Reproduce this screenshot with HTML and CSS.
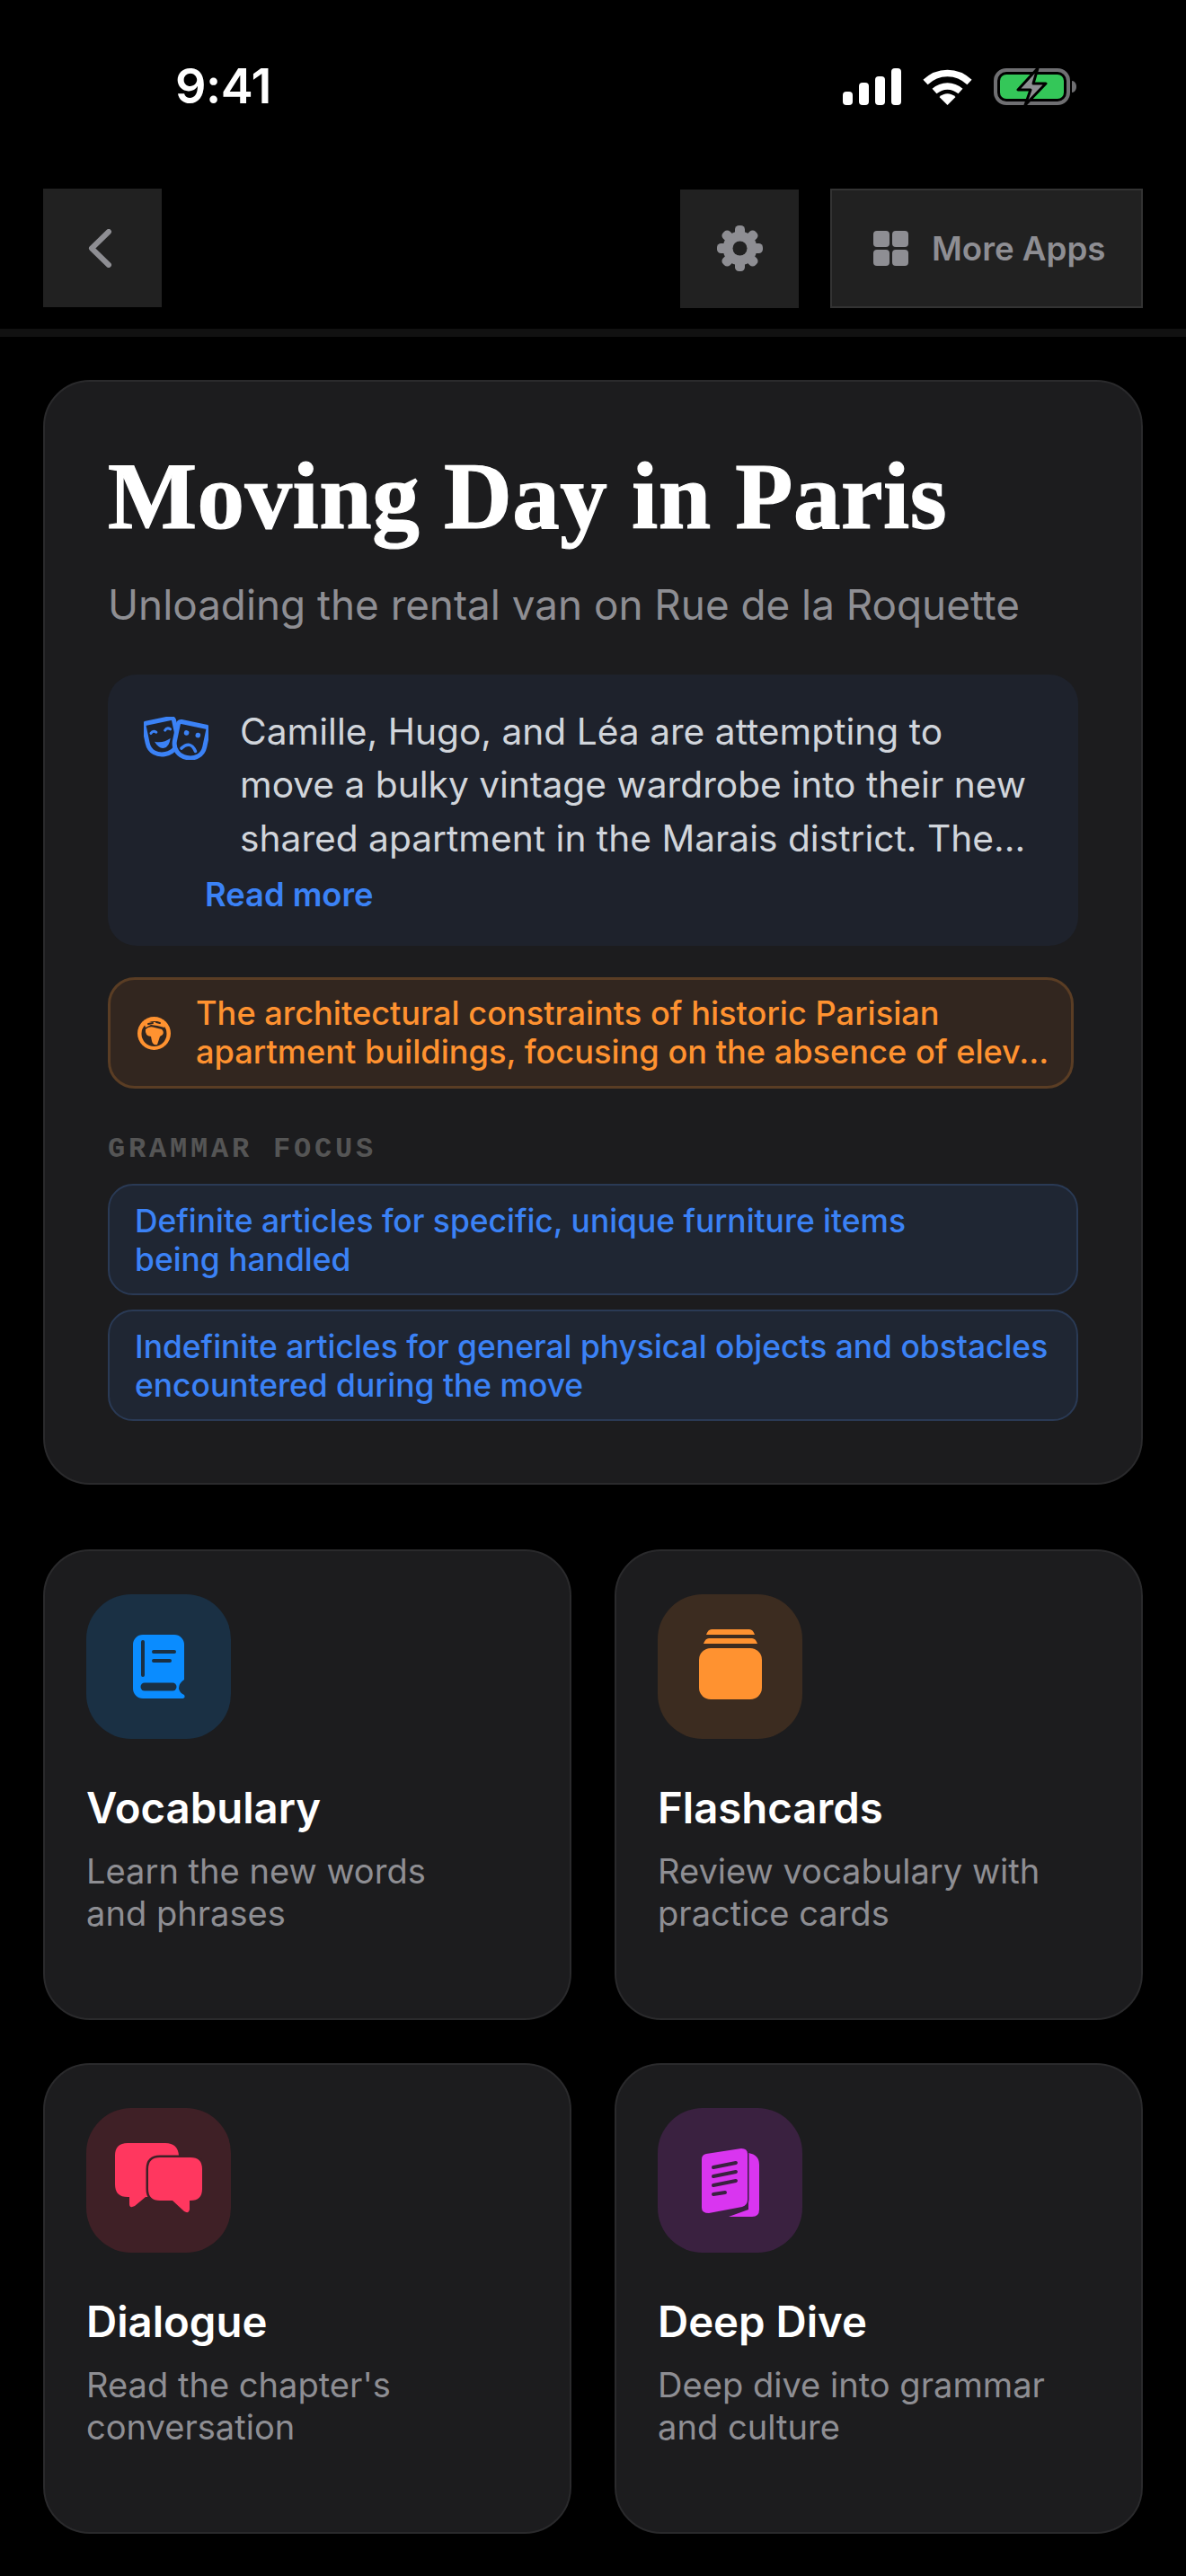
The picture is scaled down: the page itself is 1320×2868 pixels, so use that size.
FILE: index.html
```html
<!DOCTYPE html>
<html lang="en">
<head>
    <meta charset="UTF-8">
    <meta name="viewport" content="width=device-width, initial-scale=1.0">
    <title>Moving Day in Paris</title>
    <link rel="stylesheet" href="styles.css">
</head>
<body>
    <div class="status-bar">
        <span class="clock">9:41</span>
        <div class="status-icons">
            <svg class="ic-signal" viewBox="0 0 65 41" fill="#fff">
                <rect x="0" y="26" width="11" height="15" rx="4"/>
                <rect x="18" y="16" width="11" height="25" rx="4"/>
                <rect x="36" y="9" width="11" height="32" rx="4"/>
                <rect x="54" y="0" width="11" height="41" rx="4"/>
            </svg>
            <svg class="ic-wifi" viewBox="0 0 57 41" fill="none" stroke="#fff" stroke-width="7.5">
                <path d="M4 15.5C18 2 39 2 53 15.5"/>
                <path d="M14 25.5C22.5 18 34.5 18 43 25.5"/>
                <path d="M19.5 32C25 27 32 27 37.5 32L28.5 41Z" fill="#fff" stroke="none"/>
            </svg>
            <svg class="ic-battery" viewBox="0 0 92 43">
                <rect x="2" y="3" width="81" height="37" rx="12" fill="none" stroke="#6f6f72" stroke-width="4"/>
                <rect x="7" y="8" width="71" height="27" rx="7" fill="#34c759"/>
                <path d="M87 15c3 0 5 3 5 6.500s-2 6.500-5 6.500z" fill="#6f6f72"/>
                <path d="M49 1L27 25H41L35 42L58 18H44Z" fill="#8e8e93" stroke="#000" stroke-width="3" stroke-linejoin="round"/>
            </svg>
        </div>
    </div>

    <header class="topbar">
        <button class="icon-btn">
            <svg class="ic-back" viewBox="0 0 28 43" fill="none" stroke="#8e8e93" stroke-width="6" stroke-linecap="round" stroke-linejoin="round">
                <path d="M24 3L5 21.500L24 40"/>
            </svg>
        </button>
        <div class="topbar-right">
            <button class="icon-btn">
                <svg class="ic-gear" viewBox="0 0 51 51">
                    <g fill="#8e8e93">
                        <circle cx="25.500" cy="25.500" r="19"/>
                        <rect x="20" y="0" width="11" height="51" rx="4.500"/>
                        <rect x="20" y="0" width="11" height="51" rx="4.500" transform="rotate(45 25.500 25.500)"/>
                        <rect x="20" y="0" width="11" height="51" rx="4.500" transform="rotate(90 25.500 25.500)"/>
                        <rect x="20" y="0" width="11" height="51" rx="4.500" transform="rotate(135 25.500 25.500)"/>
                    </g>
                    <circle cx="25.500" cy="25.500" r="8" fill="#212121"/>
                </svg>
            </button>
            <button class="apps-btn">
                <svg class="ic-apps" viewBox="0 0 39 39" fill="#8e8e93">
                    <rect x="0" y="0" width="18" height="18" rx="4"/>
                    <rect x="21" y="0" width="18" height="18" rx="4"/>
                    <rect x="0" y="21" width="18" height="18" rx="4"/>
                    <rect x="21" y="21" width="18" height="18" rx="4"/>
                </svg>
                More Apps
            </button>
        </div>
    </header>

    <main class="content">
        <section class="chapter">
            <h1>Moving Day in Paris</h1>
            <p class="subtitle">Unloading the rental van on Rue de la Roquette</p>

            <div class="summary">
                <div class="summary-row">
                    <svg class="ic-masks" viewBox="0 0 72 48" fill="none" stroke="#3b82f6" stroke-width="5" stroke-linecap="round">
                        <g transform="translate(20 22) rotate(-12)">
                            <path d="M-14-18H14a3 3 0 0 1 3 3V4C17 14 9 20 0 20C-9 20-17 14-17 4V-15a3 3 0 0 1 3-3Z"/>
                            <path d="M-11-6Q-8-9-5-6M5-6Q8-9 11-6" stroke-width="3"/>
                            <path d="M-9 4Q0 8 9 4Q6 13 0 13Q-6 13-9 4Z" fill="#3b82f6" stroke="none"/>
                        </g>
                        <g transform="translate(52 26) rotate(12)">
                            <path d="M-14-18H14a3 3 0 0 1 3 3V4C17 14 9 20 0 20C-9 20-17 14-17 4V-15a3 3 0 0 1 3-3Z" fill="#1e222c"/>
                            <circle cx="-6" cy="-7" r="2.800" fill="#3b82f6" stroke="none"/>
                            <circle cx="7" cy="-7" r="2.800" fill="#3b82f6" stroke="none"/>
                            <path d="M-8 11Q0 0 8 11" stroke-width="3.500"/>
                        </g>
                    </svg>
                    <p>Camille, Hugo, and Léa are attempting to move a bulky vintage wardrobe into their new shared apartment in the Marais district. The...</p>
                </div>
                <a class="read-more">Read more</a>
            </div>

            <div class="culture">
                <svg class="ic-globe" viewBox="0 0 37 37">
                    <circle cx="18.500" cy="18.500" r="18.500" fill="#ff9230"/>
                    <circle cx="18.500" cy="19" r="14" fill="#32261f"/>
                    <path d="M7 6H30V12L22 10L15 9L9 12Z" fill="#ff9230"/>
                    <path d="M9 14Q13 10 19 12L27 14Q30 17 28 20L25 22L22 31Q17 32 16 27L15 22Q8 21 9 14Z" fill="#ff9230"/>
                    <path d="M12 8L17 7M21 6L25 7" stroke="#32261f" stroke-width="2" stroke-linecap="round"/>
                </svg>
                <p>The architectural constraints of historic Parisian apartment buildings, focusing on the absence of elev...</p>
            </div>

            <h2 class="focus-label">GRAMMAR FOCUS</h2>
            <div class="focus-list">
                <div class="chip">Definite articles for specific, unique furniture items<br>being handled</div>
                <div class="chip">Indefinite articles for general physical objects and obstacles encountered during the move</div>
            </div>
        </section>

        <section class="modules">
            <article class="module">
                <div class="tile tile-blue">
                    <svg class="ic-book" viewBox="0 0 58 71">
                        <path d="M11 0H46A11 11 0 0 1 57 11V50Q51 54 51 60Q52 65 57 67Q59 71 54 71H11A11 11 0 0 1 0 60V11A11 11 0 0 1 11 0Z" fill="#0a8cff"/>
                        <path d="M11 8V45M23 19H46M23 29H41M13 58H45" fill="none" stroke="#1a3044" stroke-width="4" stroke-linecap="round"/>
                        <path d="M13 58H44" fill="none" stroke="#1a3044" stroke-width="9" stroke-linecap="round"/>
                    </svg>
                </div>
                <h3>Vocabulary</h3>
                <p>Learn the new words<br>and phrases</p>
            </article>
            <article class="module">
                <div class="tile tile-orange">
                    <svg class="ic-stack" viewBox="0 0 70 78" fill="#ff9230">
                        <path d="M14 0H56Q60 0 62 6H8Q10 0 14 0Z"/>
                        <path d="M11 10H59Q63 10 65 16H5Q7 10 11 10Z"/>
                        <rect x="0" y="21" width="70" height="57" rx="13"/>
                    </svg>
                </div>
                <h3>Flashcards</h3>
                <p>Review vocabulary with<br>practice cards</p>
            </article>
            <article class="module">
                <div class="tile tile-pink">
                    <svg class="ic-chat" viewBox="0 0 98 78">
                        <path d="M14 0H56Q70 0 71 14V46Q71 60 56 60H34L22 70Q16 73 16 68V60H14Q0 60 0 46V14Q0 0 14 0Z" fill="#ff375f"/>
                        <path d="M50 16H84Q97 16 97 29V51Q97 64 84 64H83V74Q82 79 77 76L64 64H50Q37 64 37 51V29Q37 16 50 16Z" fill="#ff375f" stroke="#3f2026" stroke-width="5" paint-order="stroke"/>
                    </svg>
                </div>
                <h3>Dialogue</h3>
                <p>Read the chapter's<br>conversation</p>
            </article>
            <article class="module">
                <div class="tile tile-purple">
                    <svg class="ic-doc" viewBox="0 0 64 77">
                        <path d="M52 5Q64 7 64 18V68Q64 76 56 76L30 76L52 68Z" fill="#d935f0"/>
                        <path d="M5 6L44 0Q51 0 51 6V57Q51 63 45 65L8 72Q0 72 0 66V12Q0 7 5 6Z" fill="#d935f0" stroke="#3a2140" stroke-width="3" paint-order="stroke"/>
                        <path d="M13 21L38 16M13 31L38 26M13 41L38 36M13 51L26 49" stroke="#3a2140" stroke-width="4" stroke-linecap="round"/>
                    </svg>
                </div>
                <h3>Deep Dive</h3>
                <p>Deep dive into grammar<br>and culture</p>
            </article>
        </section>
    </main>
</body>
</html>
```

FILE: styles.css
```css
* {box-sizing:border-box;}
html, body {margin:0; padding:0;}
body {
    width:1320px;
    min-height:2868px;
    background:#000;
    color:#fff;
    font-family:Inter, "Noto Sans", sans-serif;
    overflow:hidden;
}
h1, h2, h3, p {margin:0;}
svg {display:block; flex:none;}

/* status bar */
.status-bar {
    height:210px;
    padding:70px 122px 0 195px;
    display:flex;
    justify-content:space-between;
    align-items:flex-start;
}
.clock {font-size:54px; line-height:52px; font-weight:600; letter-spacing:-0.5px;}
.status-icons {display:flex; align-items:center; gap:23px; padding-top:5px;}
.ic-signal {width:65px; height:41px;}
.ic-wifi {width:57px; height:41px;}
.ic-battery {width:92px; height:43px;}

/* top bar */
.topbar {
    height:165px;
    padding:0 48px 24px;
    display:flex;
    justify-content:space-between;
    align-items:flex-start;
    border-bottom:9px solid #111;
}
.topbar-right {display:flex; align-items:center; gap:35px;}
.icon-btn {
    width:132px;
    height:132px;
    border:0;
    padding:0;
    background:#212121;
    display:flex;
    align-items:center;
    justify-content:center;
}
.ic-back {width:28px; height:43px; margin-right:6px;}
.ic-gear {width:51px; height:51px;}
.apps-btn {
    width:348px;
    height:133px;
    border:2px solid #333;
    background:#212121;
    padding:0 0 0 46px;
    display:flex;
    align-items:center;
    gap:26px;
    color:#8e8e93;
    font:600 36.700px Inter, sans-serif;
}
.ic-apps {width:39px; height:39px;}

.content {padding:48px 48px 0;}

/* chapter card */
.chapter {
    height:1230px;
    padding:68px 70px 0;
    background:#1c1c1e;
    border:2px solid #2a2a2c;
    border-radius:52px;
}
.chapter h1 {
    font-family:"Liberation Serif", serif;
    font-size:105px;
    line-height:120px;
    font-weight:700;
    letter-spacing:0.500px;
    -webkit-text-stroke:1.200px #fff;
}
.subtitle {
    margin-top:31px;
    font-size:45.800px;
    line-height:60px;
    color:#8e8e93;
}
.summary {
    margin-top:47px;
    height:302px;
    padding:34px 50px 0 40px;
    background:#1e222c;
    border-radius:32px;
}
.summary-row {display:flex; gap:35px; align-items:flex-start;}
.ic-masks {width:72px; height:48px; margin-top:13px;}
.summary-row p {
    font-size:40.700px;
    line-height:59.400px;
    color:#d1d5db;
}
.read-more {
    display:block;
    margin:10px 0 0 68px;
    font-size:36.300px;
    line-height:46px;
    font-weight:600;
    color:#3b82f6;
}
.culture {
    margin-top:35px;
    width:1075px;
    height:124px;
    padding:0 8px 0 30px;
    display:flex;
    align-items:center;
    gap:28px;
    background:#32261f;
    border:3px solid #5a3d24;
    border-radius:30px;
}
.ic-globe {width:37px; height:37px;}
.culture p {
    font-size:36.200px;
    line-height:43px;
    font-weight:500;
    color:#ff9230;
}
.focus-label {
    margin-top:48px;
    font-family:"Liberation Mono", monospace;
    font-size:32px;
    line-height:40px;
    font-weight:700;
    letter-spacing:3.800px;
    color:#555;
}
.focus-list {margin-top:18px; display:flex; flex-direction:column; gap:16px;}
.chip {
    height:124px;
    padding:18px 20px 0 28px;
    background:#1f2633;
    border:2px solid #2a3a55;
    border-radius:28px;
    font-size:35.400px;
    line-height:43px;
    font-weight:500;
    color:#3b82f6;
}

/* module cards */
.modules {
    margin-top:72px;
    display:grid;
    grid-template-columns:1fr 1fr;
    gap:48px;
}
.module {
    height:524px;
    padding:48px 46px 0;
    background:#1c1c1e;
    border:2px solid #2a2a2c;
    border-radius:52px;
}
.tile {
    width:161px;
    height:161px;
    border-radius:50px;
    display:flex;
    align-items:center;
    justify-content:center;
}
.tile-blue {background:#1a3044;}
.tile-orange {background:#3c2c20;}
.tile-pink {background:#3f2026;}
.tile-purple {background:#3a2140;}
.ic-book {width:58px; height:71px;}
.ic-stack {width:70px; height:78px; margin-bottom:6px;}
.ic-chat {width:98px; height:78px; margin-bottom:5px;}
.ic-doc {width:64px; height:77px; margin-top:6px;}
.module h3 {
    margin-top:48px;
    font-size:47.300px;
    line-height:58px;
    font-weight:600;
}
.module p {
    margin-top:18px;
    font-size:38.100px;
    line-height:47px;
    color:#8e8e93;
}
```
